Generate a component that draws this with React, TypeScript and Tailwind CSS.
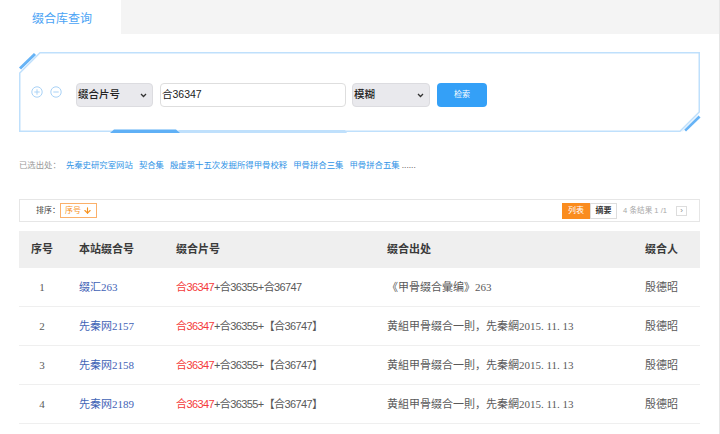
import { ArrowDown } from "lucide-react";

const sans = "font-['Liberation_Sans','Noto_Sans_CJK_SC',sans-serif]";
const serif = "font-['Liberation_Serif','Noto_Sans_CJK_SC',serif]";

const sources = [
  "先秦史研究室网站",
  "契合集",
  "殷虚第十五次发掘所得甲骨校释",
  "甲骨拼合三集",
  "甲骨拼合五集",
];

interface Row {
  no: number;
  id: string;
  first: string;
  rest: string;
  source: string;
  person: string;
}

const rows: Row[] = [
  { no: 1, id: "缀汇263", first: "合36347", rest: "+合36355+合36747", source: "《甲骨缀合彙编》263", person: "殷德昭" },
  { no: 2, id: "先秦网2157", first: "合36347", rest: "+合36355+【合36747】", source: "黄組甲骨缀合一則，先秦網2015. 11. 13", person: "殷德昭" },
  { no: 3, id: "先秦网2158", first: "合36347", rest: "+合36355+【合36747】", source: "黄組甲骨缀合一則，先秦網2015. 11. 13", person: "殷德昭" },
  { no: 4, id: "先秦网2189", first: "合36347", rest: "+合36355+【合36747】", source: "黄組甲骨缀合一則，先秦網2015. 11. 13", person: "殷德昭" },
];

function Chevron() {
  return (
    <svg width="7" height="5" viewBox="0 0 7 5" className="shrink-0">
      <path d="M1 1l2.5 2.5L6 1" fill="none" stroke="#333" strokeWidth="1.3" />
    </svg>
  );
}

function FakeSelect({ label, width }: { label: string; width: string }) {
  return (
    <div
      className={`${width} flex h-[24px] items-center justify-between rounded-[4px] border border-[#dcdce0] bg-[#e9e9ed] pl-[1px] pr-[5px] text-[10.5px] font-medium text-[#222]`}
    >
      <span>{label}</span>
      <Chevron />
    </div>
  );
}

function CircleIcon({ minus }: { minus?: boolean }) {
  return (
    <svg width="12" height="12" viewBox="0 0 12 12">
      <circle cx="6" cy="6" r="5.2" fill="none" stroke="#a9d2f6" strokeWidth="1" />
      <path d="M3.3 6h5.4" stroke="#a9d2f6" strokeWidth="1" />
      {!minus && <path d="M6 3.3v5.4" stroke="#a9d2f6" strokeWidth="1" />}
    </svg>
  );
}

function PanelFrame() {
  // decorative cut-corner frame of the search panel
  return (
    <svg
      className="pointer-events-none absolute left-0 top-0 overflow-visible"
      width="681"
      height="80"
      viewBox="0 0 681 80"
    >
      <polygon
        points="21,0.75 680.25,0.75 680.25,60 661,79.25 0.75,79.25 0.75,21"
        fill="none"
        stroke="#bfe0fc"
        strokeWidth="1.5"
      />
      <path d="M1 16.5 L16 2" stroke="#66b3f6" strokeWidth="3" />
      <path d="M666 78.5 L680.5 64.5" stroke="#66b3f6" strokeWidth="3" />
      <path d="M663 79.5 L679 63.5" stroke="#d7ecfd" strokeWidth="1" />
      <polygon points="160,78 326,78 328,81 158,81" fill="#bfe0fc" />
      <polygon points="95,77.5 157,77.5 161,81 91,81" fill="#5fb0f6" />
    </svg>
  );
}

export default function App() {
  return (
    <div className={`${sans} w-[720px] min-h-[434px] border-r border-[#e6e6e6] bg-white`}>
      {/* tab bar */}
      <div className="flex h-[34px] bg-[#f4f4f4]">
        <div className="flex w-[121px] items-center bg-white pl-[32px] pt-[4px] text-[12px] text-[#4aa3f5]">
          缀合库查询
        </div>
      </div>

      {/* search panel */}
      <div className="relative ml-[19px] mt-[18px] h-[80px] w-[681px]">
        <PanelFrame />
        <div className="flex items-start pl-[12px] pt-[31px]">
          <div className="mt-[3px] flex gap-[7px]">
            <CircleIcon />
            <CircleIcon minus />
          </div>
          <div className="ml-[14px] flex gap-[7px]">
            <FakeSelect label="缀合片号" width="w-[77px]" />
            <div className="flex h-[24px] w-[186px] items-center rounded-[4px] border border-[#dedede] bg-white pl-[1px] text-[10.5px] text-[#222]">
              合36347
            </div>
            <FakeSelect label="模糊" width="w-[78px] -ml-[1px]" />
            <button className="flex h-[24px] w-[50px] items-center justify-center rounded-[4px] bg-[#34a0f7] text-[8px] text-white">
              检索
            </button>
          </div>
        </div>
      </div>

      {/* chosen sources */}
      <div className="ml-[19px] mt-[27px] flex h-[12px] items-center gap-[6px] text-[8.4px]">
        <span className="-mr-[1px] text-[#9a9a9a]">已选出处：</span>
        {sources.map((s) => (
          <span key={s} className="text-[#2f93e6]">
            {s}
          </span>
        ))}
        <span className="-ml-[4px] text-[#666]">......</span>
      </div>

      {/* toolbar */}
      <div className="ml-[19px] mt-[28px] flex h-[23px] w-[681px] items-center border border-[#e6e6e6] pl-[16px] pr-[12px] text-[8px]">
        <span className="text-[#444]">排序：</span>
        <span className="flex h-[15px] w-[37px] items-center justify-center gap-[2px] border border-[#fbb06a] text-[#f7921e]">
          序号
          <ArrowDown size={9} strokeWidth={3} />
        </span>
        <div className="ml-auto flex items-center">
          <span className="flex h-[16px] w-[28px] items-center justify-center bg-[#fa8c1e] text-white">列表</span>
          <span className="flex h-[16px] w-[27px] items-center justify-center border border-[#ddd] font-bold text-[#333]">
            摘要
          </span>
          <span className="ml-[6px] text-[7.6px] text-[#a8a8a8]">4 条结果 1 /1</span>
          <span className="ml-[9px] flex h-[10px] w-[11px] items-center justify-center border border-[#ddd] text-[8px] leading-none text-[#888]">
            ›
          </span>
        </div>
      </div>

      {/* table */}
      <div className={`${serif} ml-[19px] mt-[9px] w-[681px] text-[11px]`}>
        <div className="grid h-[37px] grid-cols-[46px_111px_211px_258px_1fr] items-center bg-[#efefef] font-bold text-[#3a3a3a]">
          <span className="text-center">序号</span>
          <span className="pl-[14px]">本站缀合号</span>
          <span>缀合片号</span>
          <span>缀合出处</span>
          <span>缀合人</span>
        </div>
        {rows.map((r) => (
          <div
            key={r.no}
            className="grid h-[39px] grid-cols-[46px_111px_211px_258px_1fr] items-center border-b border-[#efefef] text-[#5a5a5a]"
          >
            <span className="text-center">{r.no}</span>
            <span className="pl-[14px] text-[#3f63b6]">{r.id}</span>
            <span className={`${sans} tracking-[-0.6px]`}>
              <span className="text-[#f43b3b]">{r.first}</span>
              {r.rest}
            </span>
            <span>{r.source}</span>
            <span>{r.person}</span>
          </div>
        ))}
      </div>
    </div>
  );
}
